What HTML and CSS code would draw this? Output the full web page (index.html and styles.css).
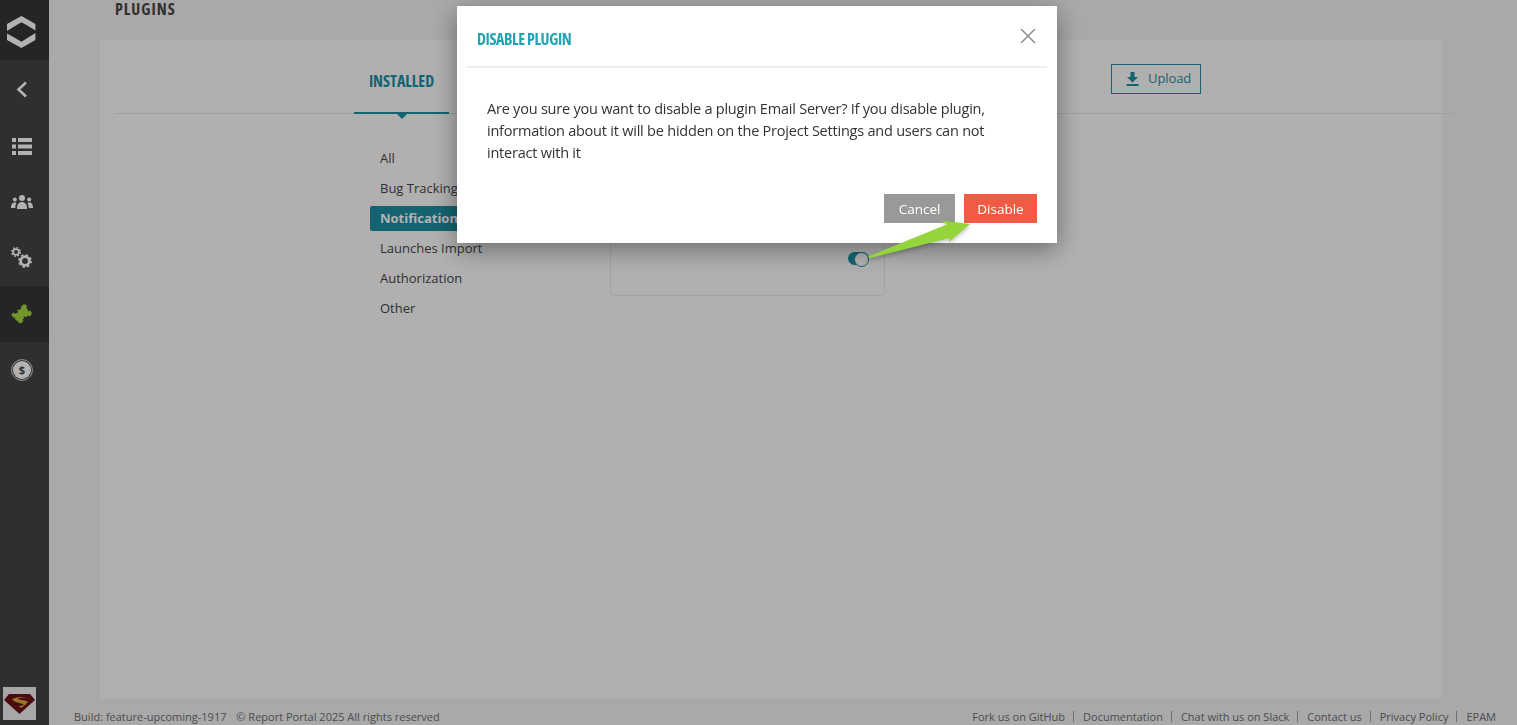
FILE: index.html
```html
<!DOCTYPE html>
<html lang="en">
<head>
    <meta charset="UTF-8">
    <meta name="viewport" content="width=device-width, initial-scale=1.0">
    <title>Plugins</title>
    <link rel="stylesheet" href="styles.css">
</head>
<body>
    <div class="app">
        <aside class="sidebar">
            <div class="logo">
                <svg width="29" height="32" viewBox="0 0 29 32"><path fill="#ffffff" d="M14.400 0 28.400 8v6.500l-7.200-4.500-6.800-3.700-7.200 4.200L0 15V8z"/><path fill="#ffffff" d="M0 17.500l7.200 4 7.200 4.200 6.800-4.200 7.200-4.500V24L14.400 32 0 24z"/></svg>
            </div>
            <div class="nav-item">
                <svg width="12" height="17" viewBox="0 0 12 17"><path fill="none" stroke="#ffffff" stroke-width="2.600" d="M10 1.500 2.500 8.500l7.500 7"/></svg>
            </div>
            <div class="nav-item">
                <svg class="list-icon" width="20" height="18" viewBox="0 0 20 18"><path fill="#ffffff" d="M0 0h4v4H0zM6 0h14v4H6zM0 6.500h4v4H0zM6 6.500h14v4H6zM0 13h4v4H0zM6 13h14v4H6z"/></svg>
            </div>
            <div class="nav-item">
                <svg width="22" height="14" viewBox="0 0 22 14"><g fill="#ffffff"><circle cx="11" cy="3" r="3"/><path d="M6 14c0-5 2-7 5-7s5 2 5 7z"/><circle cx="3.800" cy="4.500" r="2"/><path d="M0 13c0-4 1.500-5.500 3.800-5.500.7 0 1.200.1 1.700.4C4.600 9.300 4.300 11 4.300 13z"/><circle cx="18.200" cy="4.500" r="2"/><path d="M22 13c0-4-1.500-5.500-3.800-5.500-.7 0-1.200.1-1.700.4.900 1.400 1.200 3.100 1.200 5.100z"/></g></svg>
            </div>
            <div class="nav-item">
                <svg class="gear-icon" width="21" height="21" viewBox="0 0 21 21"><g fill="none" stroke="#ffffff"><circle cx="5" cy="5" r="2.900" stroke-width="1.800"/><circle cx="5" cy="5" r="4.200" stroke-width="1.600" stroke-dasharray="1.700 1.600"/><circle cx="14" cy="14" r="4.300" stroke-width="2.800"/><circle cx="14" cy="14" r="6.100" stroke-width="1.600" stroke-dasharray="2.400 2.390"/></g></svg>
            </div>
            <div class="nav-item active">
                <svg width="21" height="20" viewBox="0 0 21 20"><path fill="#a3d93e" stroke="#a3d93e" stroke-linejoin="round" stroke-width=".6" d="M.5 10.500 2.500 9 4 10l2-.5L7.500 8 6.500 6.500 10 5.500 10.500 2.500 13 .5l2.500 1-.5 2.500 1 .5 1 3 2.500-.5 1 2.500-1.500 2.500-2.500-.5-1.500 1.500-2-1-.5 2-1 1.500.5 1.500-2 2-3-1 .5-2-2 .5-1.500-2 .5-1.500-2 .5z"/></svg>
            </div>
            <div class="nav-item">
                <svg width="22" height="22" viewBox="0 0 22 22"><circle cx="11" cy="11" r="10.400" fill="none" stroke="#ffffff" stroke-width=".8"/><circle cx="11" cy="11" r="9" fill="#ffffff"/><text x="11" y="15" class="dollar">$</text></svg>
            </div>
            <div class="avatar">
                <svg width="31" height="20" viewBox="0 0 31 20"><path fill="#6a1216" d="M5 0h21l5 6-15.500 14L0 6z"/><path fill="#d9a53f" d="M8 5c4-2 10-2.500 15-1.800-3.500 0-8 .5-9 1.800 3 1.300 7 1 10 2.500-1 2-4 4.500-7 6.500l-2.500-2c2 0 5-.5 5-1.800-3-1.200-9-1.500-11.500-5.200z"/></svg>
            </div>
        </aside>

        <div class="page">
            <h1 class="page-title">PLUGINS</h1>
            <main class="card">
                <div class="tabs">
                    <div class="tab">INSTALLED</div>
                    <a class="upload">
                        <svg width="13" height="14" viewBox="0 0 13 14"><path fill="#1d8ea3" d="M4.500 0h4v5H12L6.500 10.500 1 5h3.500zM.5 12h12v2H.5z"/></svg>
                        <span>Upload</span>
                    </a>
                </div>
                <div class="plugins">
                    <ul class="filters">
                        <li>All</li>
                        <li>Bug Tracking</li>
                        <li class="selected">Notifications</li>
                        <li>Launches Import</li>
                        <li>Authorization</li>
                        <li>Other</li>
                    </ul>
                    <div class="plugin-card">
                        <span class="toggle"></span>
                    </div>
                </div>
            </main>
            <footer class="footer">
                <div>Build: feature-upcoming-1917 <span class="copy">© Report Portal 2025 All rights reserved</span></div>
                <div class="links">
                    <span>Fork us on GitHub</span>
                    <span>Documentation</span>
                    <span>Chat with us on Slack</span>
                    <span>Contact us</span>
                    <span>Privacy Policy</span>
                    <span>EPAM</span>
                </div>
            </footer>
        </div>
    </div>

    <div class="overlay"></div>

    <div class="modal">
        <div class="modal-head">
            <h2>DISABLE PLUGIN</h2>
            <svg class="close" width="16" height="16" viewBox="0 0 16 16"><path fill="none" stroke="#8f8f8f" stroke-width="1.500" d="M1 1l14 14M15 1 1 15"/></svg>
        </div>
        <p class="modal-text">Are you sure you want to disable a plugin Email Server? If you disable plugin, information about it will be hidden on the Project Settings and users can not interact with it</p>
        <div class="modal-actions">
            <button class="btn btn-cancel">Cancel</button>
            <button class="btn btn-danger">Disable</button>
        </div>
    </div>

    <svg class="arrow" width="104" height="40" viewBox="0 0 104 40"><path fill="#93d53b" d="M0 36.500 79 4.500 73.600.6 102 4 81 22 81.500 18 2 38z"/></svg>
</body>
</html>
```

FILE: styles.css
```css
* {
    box-sizing: border-box;
}
html, body {
    height: 100%;
}
body {
    margin: 0;
    overflow: hidden;
    font-family: "Open Sans", Arial, sans-serif;
    background-color: #f2f2f2;
    color: #464547;
}
.app {
    display: flex;
    height: 725px;
}
.sidebar {
    width: 49px;
    flex-shrink: 0;
    display: flex;
    flex-direction: column;
    padding-right: 6px;
    background-color: #434446;
}
.logo {
    width: 49px;
    height: 60px;
    margin-right: -6px;
    display: flex;
    align-items: center;
    padding: 4px 0 0 7px;
    background-color: #363638;
}
.nav-item {
    width: 49px;
    height: 56px;
    padding-right: 6px;
    display: flex;
    align-items: center;
    justify-content: center;
}
.nav-item:nth-child(2) {
    height: 58px;
}
.nav-item.active {
    background-color: #363638;
}
.list-icon {
    margin-top: 2px;
}
.gear-icon {
    margin-top: -1px;
}
.dollar {
    font-size: 11px;
    font-weight: 700;
    text-anchor: middle;
    fill: #434446;
}
.avatar {
    margin: auto 0 5px 3px;
    width: 33px;
    height: 33px;
    display: flex;
    align-items: center;
    justify-content: center;
    background-color: #f0f0f0;
}
.page {
    flex: 1;
    display: flex;
    flex-direction: column;
    min-width: 0;
}
.page-title {
    height: 40px;
    margin: 0 0 0 66px;
    font-size: 16px;
    line-height: 19px;
    font-weight: 700;
    letter-spacing: 1px;
    font-stretch: condensed;
    color: #464547;
}
.card {
    width: 1342px;
    height: 658px;
    margin-left: 51px;
    background-color: #fcfcfc;
}
.tabs {
    position: relative;
    height: 74px;
    margin: 0 -13px 0 14px;
    display: flex;
    justify-content: space-between;
    border-bottom: 1px solid #e5e5e5;
}
.tab {
    width: 95px;
    height: 74px;
    margin-left: 240px;
    padding-top: 31px;
    text-align: center;
    font-size: 16px;
    line-height: 20px;
    font-weight: 700;
    font-stretch: condensed;
    color: #1d8ea3;
    border-bottom: 2px solid #1d8ea3;
}
.tab::after {
    content: "";
    display: block;
    width: 0;
    margin: 23px auto 0;
    border: 5px solid transparent;
    border-bottom-width: 0;
    border-top-color: #1d8ea3;
}
.upload {
    display: flex;
    align-items: center;
    gap: 9px;
    width: 90px;
    height: 30px;
    margin: 24px 254px 0 0;
    padding: 0 0 1px 14px;
    font-size: 13px;
    letter-spacing: -.1px;
    color: #1d8ea3;
    border: 1px solid #1d8ea3;
}
.upload span {
    margin-top: -2px;
}
.plugins {
    display: flex;
    padding: 32px 0 0 270px;
}
.filters {
    width: 240px;
    margin: 0;
    padding: 0;
    list-style: none;
    font-size: 13px;
}
.filters li {
    width: 140px;
    height: 25px;
    margin-bottom: 5px;
    padding: 0 10px;
    line-height: 25px;
    white-space: nowrap;
}
.filters li.selected {
    color: #ffffff;
    font-weight: 700;
    background-color: #1d8ea3;
    border-radius: 2px;
}
.plugin-card {
    width: 275px;
    height: 150px;
    display: flex;
    align-items: flex-end;
    justify-content: flex-end;
    padding: 0 15px 30px 0;
    border: 1px solid #e9e9e9;
    border-radius: 4px;
}
.toggle {
    display: block;
    width: 21px;
    height: 13px;
    border-radius: 7px;
    background-color: #1d8ea3;
    position: relative;
}
.toggle::after {
    content: "";
    position: absolute;
    right: 0;
    top: 0;
    width: 13px;
    height: 13px;
    border-radius: 50%;
    background-color: #ffffff;
    border: 1px solid #1d8ea3;
}
.footer {
    height: 27px;
    display: flex;
    justify-content: space-between;
    align-items: center;
    padding: 9px 21px 0 25px;
    font-size: 11px;
    color: #6f6f6f;
}
.copy {
    margin-left: 7px;
}
.links {
    display: flex;
}
.links span + span {
    margin-left: 8px;
    padding-left: 10px;
    background: linear-gradient(#a0a0a0, #a0a0a0) left center / 1px 11px no-repeat;
}
/* dim layer over the page, modal sits on top */
.overlay {
    position: fixed;
    inset: 0;
    background-color: rgba(0, 0, 0, .3);
}
.modal {
    position: fixed;
    left: 457px;
    top: 6px;
    width: 600px;
    height: 237px;
    padding: 0 10px;
    background-color: #ffffff;
    box-shadow: 0 6px 24px rgba(0, 0, 0, .4);
}
.modal-head {
    height: 62px;
    display: flex;
    justify-content: space-between;
    align-items: flex-start;
    border-bottom: 2px solid #eeeeee;
}
.modal-head h2 {
    margin: 23px 0 0 10px;
    font-size: 16px;
    line-height: 20px;
    font-weight: 700;
    font-stretch: condensed;
    letter-spacing: -.4px;
    color: #1fa3b5;
}
.close {
    margin: 22px 11px 0 0;
}
.modal-text {
    margin: 0;
    padding: 30px 20px 0;
    font-size: 14.5px;
    letter-spacing: -.22px;
    line-height: 22px;
    color: #333333;
}
.modal-actions {
    display: flex;
    justify-content: flex-end;
    gap: 9px;
    padding: 30px 10px 0 0;
}
.btn {
    height: 29px;
    border: none;
    font-family: inherit;
    font-size: 13.5px;
    color: #ffffff;
}
.btn-cancel {
    width: 71px;
    background-color: #999999;
}
.btn-danger {
    width: 73px;
    background-color: #f15b43;
}
.arrow {
    position: fixed;
    left: 868px;
    top: 220px;
    filter: drop-shadow(0 2px 2px rgba(0, 0, 0, .25));
}
```
